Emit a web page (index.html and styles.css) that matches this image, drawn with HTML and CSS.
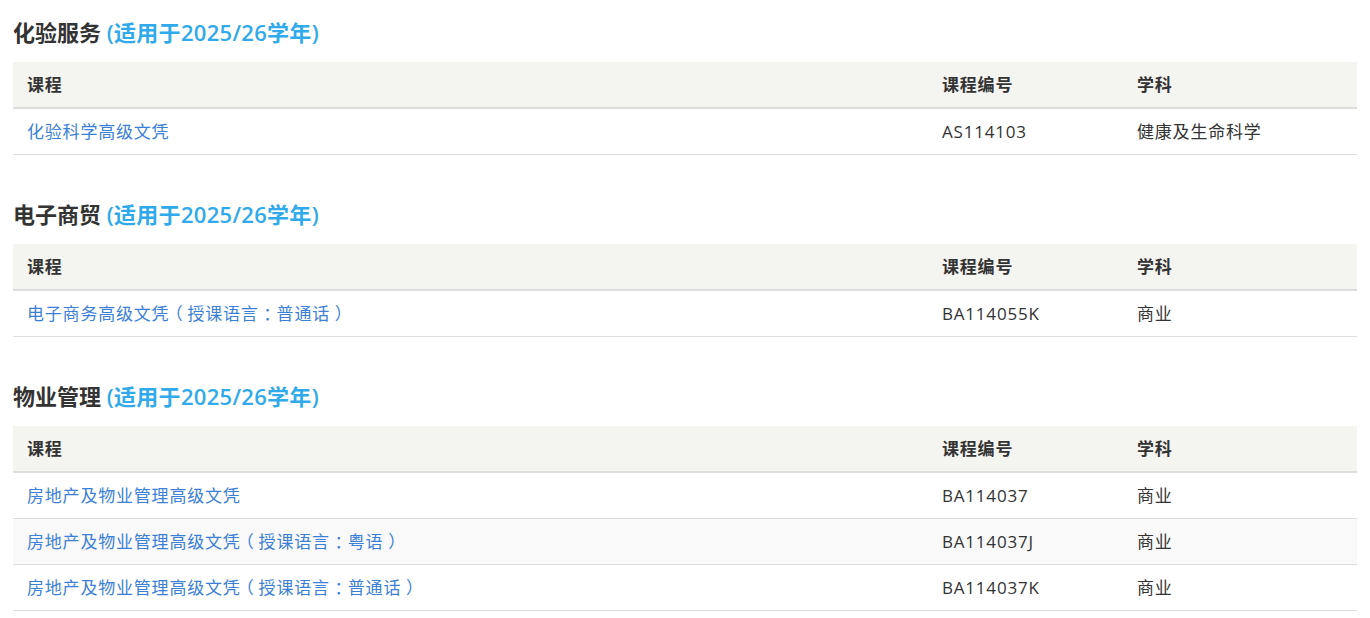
FILE: index.html
```html
<!DOCTYPE html>
<html lang="zh-CN">
<head>
<meta charset="utf-8">
<title>课程</title>
<link rel="stylesheet" href="styles.css">
</head>
<body>
<div class="page">
  <section class="group">
    <h2 class="group-title">化验服务 <span class="year">(适用于2025/26学年)</span></h2>
    <table class="courses">
      <thead><tr><th class="c-name">课程</th><th class="c-code">课程编号</th><th class="c-subj">学科</th></tr></thead>
      <tbody>
        <tr><td><a href="#">化验科学高级文凭</a></td><td>AS114103</td><td>健康及生命科学</td></tr>
      </tbody>
    </table>
  </section>
  <section class="group">
    <h2 class="group-title">电子商贸 <span class="year">(适用于2025/26学年)</span></h2>
    <table class="courses">
      <thead><tr><th class="c-name">课程</th><th class="c-code">课程编号</th><th class="c-subj">学科</th></tr></thead>
      <tbody>
        <tr><td><a href="#">电子商务高级文凭<span class="punct">（</span>授课语言<span class="punct">：</span>普通话<span class="punct">）</span></a></td><td>BA114055K</td><td>商业</td></tr>
      </tbody>
    </table>
  </section>
  <section class="group">
    <h2 class="group-title">物业管理 <span class="year">(适用于2025/26学年)</span></h2>
    <table class="courses">
      <thead><tr><th class="c-name">课程</th><th class="c-code">课程编号</th><th class="c-subj">学科</th></tr></thead>
      <tbody>
        <tr><td><a href="#">房地产及物业管理高级文凭</a></td><td>BA114037</td><td>商业</td></tr>
        <tr><td><a href="#">房地产及物业管理高级文凭<span class="punct">（</span>授课语言<span class="punct">：</span>粤语<span class="punct">）</span></a></td><td>BA114037J</td><td>商业</td></tr>
        <tr><td><a href="#">房地产及物业管理高级文凭<span class="punct">（</span>授课语言<span class="punct">：</span>普通话<span class="punct">）</span></a></td><td>BA114037K</td><td>商业</td></tr>
      </tbody>
    </table>
  </section>
</div>
</body>
</html>
```
FILE: styles.css
```css
html, body {
  margin: 0;
  padding: 0;
  background: #ffffff;
}
body {
  font-family: "Open Sans", "Noto Sans CJK SC", sans-serif;
  color: #333333;
}
.page {
  padding: 17px 13px 0;
}
.group {
  margin-bottom: 44px;
}
.group-title {
  margin: 0 0 15px;
  font-size: 22px;
  line-height: 30px;
  font-weight: 600;
  color: #333333;
}
.year {
  color: #30aaea;
  letter-spacing: 0.3px;
}
.courses {
  width: 100%;
  border-collapse: collapse;
  font-size: 17px;
  letter-spacing: 0.8px;
}
.courses th {
  text-align: left;
  font-weight: 700;
  background: #f4f4f0;
  padding: 10px 14px;
  line-height: 25px;
  border-bottom: 2px solid #dddddd;
}
.courses td {
  padding: 10px 14px;
  line-height: 25px;
  border-bottom: 1px solid #dddddd;
}
.courses tbody tr:nth-child(even) td {
  background: #f9f9f9;
}
.c-name { width: 887px; }
.c-code { width: 167px; }
.courses a {
  color: #3c7fd6;
  text-decoration: none;
}
.punct {
  display: inline-block;
  width: 18px;
  text-align: center;
  letter-spacing: 0;
  font-feature-settings: "halt" 1;
}
```
